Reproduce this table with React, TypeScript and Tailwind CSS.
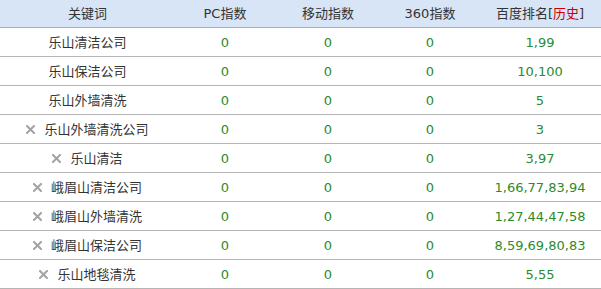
const rows = [
  { kw: '乐山清洁公司', del: false, rank: '1,99' },
  { kw: '乐山保洁公司', del: false, rank: '10,100' },
  { kw: '乐山外墙清洗', del: false, rank: '5' },
  { kw: '乐山外墙清洗公司', del: true, rank: '3' },
  { kw: '乐山清洁', del: true, rank: '3,97' },
  { kw: '峨眉山清洁公司', del: true, rank: '1,66,77,83,94' },
  { kw: '峨眉山外墙清洗', del: true, rank: '1,27,44,47,58' },
  { kw: '峨眉山保洁公司', del: true, rank: '8,59,69,80,83' },
  { kw: '乐山地毯清洗', del: true, rank: '5,55' },
];

const grid = 'grid grid-cols-[175px_100px_106px_98px_122px]';

function DelIcon() {
  return (
    <svg width="9" height="9" viewBox="0 0 9 9" className="mr-[9px] shrink-0">
      <path d="M1 1L8 8M8 1L1 8" stroke="#a3a3a3" strokeWidth="2" strokeLinecap="square" />
    </svg>
  );
}

export default function App() {
  return (
    <div className="w-[601px] h-[289px] bg-white text-[13px] text-[#333] font-['DejaVu_Sans','Noto_Sans_CJK_SC',sans-serif] overflow-hidden">
      {/* header */}
      <div className={`${grid} h-[28px] bg-[#d7e5f6] border-b border-[#adadad] items-center text-center`}>
        <div>关键词</div>
        <div>PC指数</div>
        <div>移动指数</div>
        <div>360指数</div>
        <div>
          百度排名[<span className="text-[#cc0000]">历史</span>]
        </div>
      </div>

      {rows.map((r) => (
        <div
          key={r.kw}
          className={`${grid} h-[29px] border-b border-[#b5b5b5] items-center text-center pt-[1px]`}
        >
          <div className="flex items-center justify-center">
            {r.del && <DelIcon />}
            <span>{r.kw}</span>
          </div>
          <div className="text-[#2d8a2d]">0</div>
          <div className="text-[#2d8a2d]">0</div>
          <div className="text-[#2d8a2d]">0</div>
          <div className="text-[#2d8a2d]">{r.rank}</div>
        </div>
      ))}
    </div>
  );
}
